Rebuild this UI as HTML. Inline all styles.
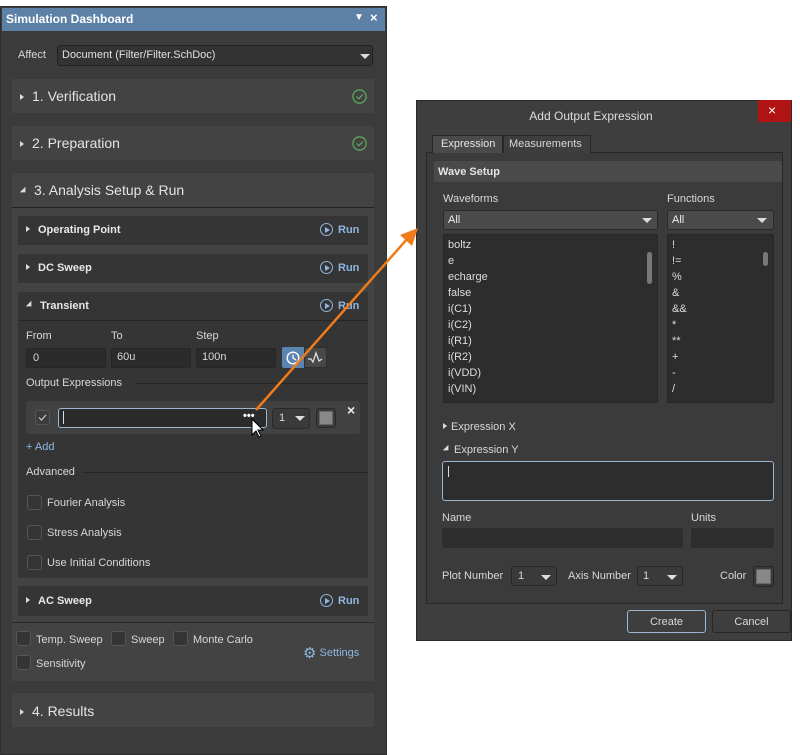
<!DOCTYPE html>
<html><head><meta charset="utf-8"><style>
*{box-sizing:border-box;margin:0;padding:0}
body{width:800px;height:755px;background:#fff;position:relative;overflow:hidden;font-family:"Liberation Sans",sans-serif;font-size:11px;color:#d8d8d8}
.a{position:absolute}
.t{position:absolute;white-space:nowrap}
.card{position:absolute;background:#434343}
.sub{position:absolute;background:#353535}
.inp{position:absolute;background:#2b2b2b;border:1px solid #262626;border-radius:2px}
.cb{position:absolute;width:15px;height:15px;border:1px solid #555;background:#353535;border-radius:3px}
.run{position:absolute;color:#8fb6e0;font-weight:bold;font-size:11px}
.run span{display:inline-block;width:13px;height:13px;border:1.3px solid #8fb6e0;border-radius:50%;vertical-align:-3px;margin-right:5px;position:relative}
.run span:after{content:"";position:absolute;left:4px;top:2.5px;border-left:5px solid #8fb6e0;border-top:3.5px solid transparent;border-bottom:3.5px solid transparent}
.tri{display:inline-block;width:0;height:0;border-left:4px solid #ddd;border-top:3.5px solid transparent;border-bottom:3.5px solid transparent;margin-right:8px;vertical-align:1px}
.trd{display:inline-block;width:0;height:0;border-top:4px solid #ddd;border-left:4px solid transparent;border-right:4px solid transparent;transform:rotate(-45deg);margin-right:6px;vertical-align:2px}
.dd{position:absolute;width:0;height:0;border-top:5px solid #ddd;border-left:5px solid transparent;border-right:5px solid transparent}
.chk{position:absolute;width:15px;height:15px}
.h14{font-size:14px;color:#e4e4e4}
.lst div{height:16px;line-height:16px}
</style></head><body>
<div class="a" style="left:0;top:6px;width:387px;height:749px;background:#3b3b3b;border:1px solid #2e2e2e"></div>
<div class="a" style="left:2px;top:8px;width:383px;height:23px;background:#5d80a6"></div>
<div class="t" style="left:6px;top:12px;font-size:12px;font-weight:bold;color:#fff">Simulation Dashboard</div>
<div class="t" style="left:354px;top:12px;font-size:10px;color:#fff">▼</div>
<div class="t" style="left:370px;top:10px;font-size:13px;font-weight:bold;color:#fff">×</div>
<div class="t" style="left:18px;top:49px">Affect</div>
<div class="a" style="left:57px;top:45px;width:316px;height:21px;background:#333;border:1px solid #222;border-radius:3px"></div>
<div class="t" style="left:62px;top:49px;color:#e0e0e0">Document (Filter/Filter.SchDoc)</div>
<div class="dd" style="left:360px;top:54px"></div>

<div class="card" style="left:12px;top:79px;width:362px;height:34px"></div>
<div class="t h14" style="left:20px;top:88px"><span class="tri"></span>1. Verification</div>
<svg class="chk" style="left:352px;top:89px" viewBox="0 0 15 15"><circle cx="7.5" cy="7.5" r="6.6" fill="none" stroke="#5cae5c" stroke-width="1.2"/><path d="M4.5 7.5 L6.8 9.8 L10.7 5.6" fill="none" stroke="#5cae5c" stroke-width="1.2"/></svg>
<div class="card" style="left:12px;top:126px;width:362px;height:34px"></div>
<div class="t h14" style="left:20px;top:135px"><span class="tri"></span>2. Preparation</div>
<svg class="chk" style="left:352px;top:136px" viewBox="0 0 15 15"><circle cx="7.5" cy="7.5" r="6.6" fill="none" stroke="#5cae5c" stroke-width="1.2"/><path d="M4.5 7.5 L6.8 9.8 L10.7 5.6" fill="none" stroke="#5cae5c" stroke-width="1.2"/></svg>

<div class="card" style="left:12px;top:173px;width:362px;height:508px"></div>
<div class="t h14" style="left:20px;top:182px"><span class="trd"></span>3. Analysis Setup &amp; Run</div>
<div class="a" style="left:12px;top:207px;width:362px;height:1px;background:#222"></div>

<div class="sub" style="left:18px;top:216px;width:350px;height:29px"></div>
<div class="t" style="left:26px;top:224px;font-weight:bold;color:#e8e8e8"><span class="tri"></span>Operating Point</div>
<div class="run" style="left:320px;top:223px"><span></span>Run</div>
<div class="sub" style="left:18px;top:254px;width:350px;height:29px"></div>
<div class="t" style="left:26px;top:262px;font-weight:bold;color:#e8e8e8"><span class="tri"></span>DC Sweep</div>
<div class="run" style="left:320px;top:261px"><span></span>Run</div>
<div class="sub" style="left:18px;top:292px;width:350px;height:286px"></div>
<div class="t" style="left:26px;top:300px;font-weight:bold;color:#e8e8e8"><span class="trd"></span>Transient</div>
<div class="run" style="left:320px;top:299px"><span></span>Run</div>
<div class="a" style="left:18px;top:320px;width:350px;height:1px;background:#262626"></div>
<div class="t" style="left:26px;top:330px">From</div>
<div class="t" style="left:111px;top:330px">To</div>
<div class="t" style="left:196px;top:330px">Step</div>
<div class="inp" style="left:26px;top:348px;width:80px;height:20px"></div>
<div class="t" style="left:33px;top:352px">0</div>
<div class="inp" style="left:111px;top:348px;width:80px;height:20px"></div>
<div class="t" style="left:117px;top:351px">60u</div>
<div class="inp" style="left:196px;top:348px;width:80px;height:20px"></div>
<div class="t" style="left:202px;top:351px">100n</div>
<div class="a" style="left:282px;top:347px;width:22px;height:21px;background:#5b84b0;border-radius:2px 0 0 2px"></div>
<svg class="a" style="left:286px;top:351px" width="14" height="14"><circle cx="7" cy="7" r="5.8" fill="none" stroke="#fff" stroke-width="1.4"/><path d="M7 3.5 L7 7 L10 9" fill="none" stroke="#fff" stroke-width="1.3"/></svg>
<div class="a" style="left:304px;top:347px;width:23px;height:21px;background:#484848;border:1px solid #2e2e2e;border-radius:0 2px 2px 0"></div>
<svg class="a" style="left:307px;top:351px" width="16" height="13"><path d="M1 8 L4 8 L6 11 L9 2 L12 10 L15 8" stroke="#ddd" stroke-width="1.3" fill="none"/></svg>
<div class="t" style="left:26px;top:377px">Output Expressions</div>
<div class="a" style="left:135px;top:383px;width:233px;height:1px;background:#262626"></div>
<div class="a" style="left:26px;top:401px;width:334px;height:33px;background:#414141;border-radius:3px"></div>
<div class="cb" style="left:35px;top:410px;background:#3c3c3c"></div>
<svg class="a" style="left:37px;top:412px" width="11" height="11"><path d="M2 5.5 L4.5 8 L9 3" fill="none" stroke="#ccc" stroke-width="1.2"/></svg>
<div class="a" style="left:58px;top:408px;width:209px;height:20px;background:#2b2b2b;border:1px solid #9ab7d4;border-radius:3px"></div>
<div class="a" style="left:63px;top:411px;width:1px;height:13px;background:#ddd"></div>
<div class="t" style="left:243px;top:410px;font-weight:bold;color:#fff">•••</div>
<div class="a" style="left:272px;top:408px;width:38px;height:21px;background:#3a3a3a;border:1px solid #2a2a2a;border-radius:3px"></div>
<div class="t" style="left:279px;top:412px">1</div>
<div class="dd" style="left:295px;top:416px"></div>
<div class="a" style="left:316px;top:408px;width:20px;height:20px;border:1px solid #2a2a2a;background:#3a3a3a;border-radius:3px"></div>
<div class="a" style="left:319px;top:411px;width:14px;height:14px;background:#888;border:1px solid #666"></div>
<div class="t" style="left:347px;top:402px;font-size:14px;font-weight:bold;color:#eee">×</div>
<div class="t" style="left:26px;top:441px;color:#8fb6e0">+ Add</div>
<div class="t" style="left:26px;top:466px">Advanced</div>
<div class="a" style="left:83px;top:472px;width:285px;height:1px;background:#262626"></div>
<div class="cb" style="left:27px;top:495px"></div><div class="t" style="left:47px;top:497px">Fourier Analysis</div>
<div class="cb" style="left:27px;top:525px"></div><div class="t" style="left:47px;top:527px">Stress Analysis</div>
<div class="cb" style="left:27px;top:555px"></div><div class="t" style="left:47px;top:557px">Use Initial Conditions</div>
<div class="sub" style="left:18px;top:586px;width:350px;height:30px"></div>
<div class="t" style="left:26px;top:595px;font-weight:bold;color:#e8e8e8"><span class="tri"></span>AC Sweep</div>
<div class="run" style="left:320px;top:594px"><span></span>Run</div>
<div class="a" style="left:12px;top:622px;width:362px;height:1px;background:#2a2a2a"></div>
<div class="cb" style="left:16px;top:631px"></div><div class="t" style="left:36px;top:634px">Temp. Sweep</div>
<div class="cb" style="left:111px;top:631px"></div><div class="t" style="left:131px;top:634px">Sweep</div>
<div class="cb" style="left:173px;top:631px"></div><div class="t" style="left:193px;top:634px">Monte Carlo</div>
<div class="cb" style="left:16px;top:655px"></div><div class="t" style="left:36px;top:658px">Sensitivity</div>
<div class="t" style="left:303px;top:644px;color:#8fb6e0;font-size:11px"><span style="font-size:15px;vertical-align:-2px">⚙</span> Settings</div>
<div class="card" style="left:12px;top:693px;width:362px;height:34px"></div>
<div class="t h14" style="left:20px;top:703px"><span class="tri"></span>4. Results</div>

<div class="a" style="left:416px;top:100px;width:376px;height:541px;background:#3e3e3e;border:1px solid #2a2a2a"></div>
<div class="t" style="left:416px;top:109px;width:350px;text-align:center;font-size:12px;color:#ddd">Add Output Expression</div>
<div class="a" style="left:758px;top:100px;width:33px;height:22px;background:#b01313"></div>
<div class="t" style="left:768px;top:102px;font-size:14px;color:#fff">×</div>
<div class="a" style="left:426px;top:152px;width:357px;height:452px;border:1px solid #262626;background:#3b3b3b"></div>
<div class="a" style="left:432px;top:135px;width:71px;height:18px;background:#4a4a4a;border:1px solid #262626;border-bottom:none"></div>
<div class="t" style="left:441px;top:138px;color:#e4e4e4">Expression</div>
<div class="a" style="left:503px;top:135px;width:88px;height:18px;background:#3e3e3e;border:1px solid #262626;border-bottom:none"></div>
<div class="t" style="left:509px;top:138px">Measurements</div>
<div class="a" style="left:434px;top:161px;width:348px;height:21px;background:#4a4a4a;border-radius:2px"></div>
<div class="t" style="left:438px;top:166px;font-weight:bold;color:#e4e4e4">Wave Setup</div>
<div class="t" style="left:443px;top:193px">Waveforms</div>
<div class="t" style="left:667px;top:193px">Functions</div>
<div class="a" style="left:443px;top:210px;width:215px;height:20px;background:#4a4a4a;border:1px solid #2a2a2a;border-radius:2px"></div>
<div class="t" style="left:448px;top:214px;color:#eee">All</div>
<div class="dd" style="left:642px;top:218px"></div>
<div class="a" style="left:667px;top:210px;width:107px;height:20px;background:#4a4a4a;border:1px solid #2a2a2a;border-radius:2px"></div>
<div class="t" style="left:672px;top:214px;color:#eee">All</div>
<div class="dd" style="left:757px;top:218px"></div>
<div class="a" style="left:443px;top:234px;width:215px;height:169px;background:#2d2d2d;border:1px solid #262626;border-radius:2px"></div>
<div class="a lst" style="left:448px;top:237px;color:#ddd">
<div>boltz</div><div>e</div><div>echarge</div><div>false</div><div>i(C1)</div><div>i(C2)</div><div>i(R1)</div><div>i(R2)</div><div>i(VDD)</div><div>i(VIN)</div></div>
<div class="a" style="left:647px;top:252px;width:5px;height:32px;background:#777;border-radius:3px"></div>
<div class="a" style="left:667px;top:234px;width:107px;height:169px;background:#2d2d2d;border:1px solid #262626;border-radius:2px"></div>
<div class="a lst" style="left:672px;top:237px;color:#ddd">
<div>!</div><div>!=</div><div>%</div><div>&amp;</div><div>&amp;&amp;</div><div>*</div><div>**</div><div>+</div><div>-</div><div>/</div></div>
<div class="a" style="left:763px;top:252px;width:5px;height:14px;background:#777;border-radius:3px"></div>
<div class="t" style="left:443px;top:421px"><span class="tri" style="margin-right:4px"></span>Expression X</div>
<div class="t" style="left:443px;top:444px"><span class="trd" style="margin-right:3px"></span>Expression Y</div>
<div class="a" style="left:442px;top:461px;width:332px;height:40px;background:#2d2d2d;border:1px solid #9ab7d4;border-radius:3px"></div>
<div class="a" style="left:448px;top:466px;width:1px;height:11px;background:#ddd"></div>
<div class="t" style="left:442px;top:512px">Name</div>
<div class="t" style="left:691px;top:512px">Units</div>
<div class="a" style="left:442px;top:528px;width:241px;height:20px;background:#2d2d2d;border-radius:3px"></div>
<div class="a" style="left:691px;top:528px;width:83px;height:20px;background:#2d2d2d;border-radius:3px"></div>
<div class="t" style="left:442px;top:570px">Plot Number</div>
<div class="a" style="left:511px;top:566px;width:46px;height:20px;background:#3a3a3a;border:1px solid #262626;border-radius:3px"></div>
<div class="t" style="left:518px;top:570px">1</div><div class="dd" style="left:541px;top:575px"></div>
<div class="t" style="left:568px;top:570px">Axis Number</div>
<div class="a" style="left:637px;top:566px;width:46px;height:20px;background:#3a3a3a;border:1px solid #262626;border-radius:3px"></div>
<div class="t" style="left:643px;top:570px">1</div><div class="dd" style="left:667px;top:575px"></div>
<div class="t" style="left:720px;top:570px">Color</div>
<div class="a" style="left:753px;top:566px;width:21px;height:21px;border:1px solid #262626;background:#3a3a3a;border-radius:3px"></div>
<div class="a" style="left:756px;top:569px;width:15px;height:15px;background:#888;border:1px solid #666"></div>
<div class="a" style="left:627px;top:610px;width:79px;height:23px;background:#3e3e3e;border:1px solid #9ab7d4;border-radius:3px"></div>
<div class="t" style="left:627px;top:616px;width:79px;text-align:center">Create</div>
<div class="a" style="left:712px;top:610px;width:79px;height:23px;background:#3e3e3e;border:1px solid #262626;border-radius:3px"></div>
<div class="t" style="left:712px;top:616px;width:79px;text-align:center">Cancel</div>

<svg class="a" style="left:0;top:0" width="800" height="755">
<line x1="256" y1="410" x2="408" y2="238" stroke="#f07b1a" stroke-width="2.5"/>
<polygon points="418,228 400,235 412,246" fill="#f07b1a"/>
<path d="M252 419 L252 435 L256 431 L259 437 L261 436 L258 430 L263 430 Z" fill="#fff" stroke="#000" stroke-width="1"/>
</svg>
</body></html>
